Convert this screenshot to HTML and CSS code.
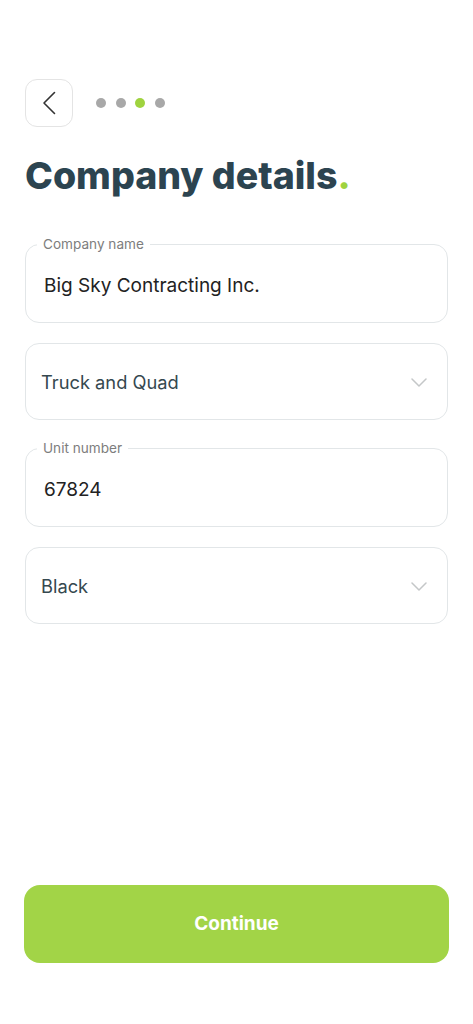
FILE: index.html
```html
<!DOCTYPE html>
<html lang="en">
<head>
  <meta charset="UTF-8">
  <title>Company details</title>
  <link rel="stylesheet" href="styles.css">
</head>
<body>
  <main class="screen">
    <header class="topbar">
      <button class="back-btn" type="button" aria-label="Back">
        <svg width="14" height="24" viewBox="0 0 14 24"><path d="M12.5 1.5 L2 12 L12.5 22.5" fill="none" stroke="#333" stroke-width="1.6" stroke-linecap="round" stroke-linejoin="round"/></svg>
      </button>
      <div class="steps">
        <span class="dot"></span>
        <span class="dot"></span>
        <span class="dot active"></span>
        <span class="dot"></span>
      </div>
    </header>

    <h1 class="title">Company details<span class="accent">.</span></h1>

    <form class="form">
      <fieldset class="field">
        <legend>Company name</legend>
        <input type="text" value="Big Sky Contracting Inc.">
      </fieldset>

      <div class="select">
        <span>Truck and Quad</span>
        <svg width="16" height="9" viewBox="0 0 16 9"><path d="M1 1 L8 8 L15 1" fill="none" stroke="#c4c7c8" stroke-width="1.5" stroke-linecap="round" stroke-linejoin="round"/></svg>
      </div>

      <fieldset class="field">
        <legend>Unit number</legend>
        <input type="text" value="67824">
      </fieldset>

      <div class="select">
        <span>Black</span>
        <svg width="16" height="9" viewBox="0 0 16 9"><path d="M1 1 L8 8 L15 1" fill="none" stroke="#c4c7c8" stroke-width="1.5" stroke-linecap="round" stroke-linejoin="round"/></svg>
      </div>
    </form>

    <button class="continue" type="button">Continue</button>
  </main>
</body>
</html>
```

FILE: styles.css
```css
html, body {
  margin: 0;
  background: #fff;
}
body {
  font-family: Inter, "Noto Sans", sans-serif;
  color: #222;
}
.screen {
  box-sizing: border-box;
  min-height: 100vh;
  display: flex;
  flex-direction: column;
  padding: 79px 25px 61px 25px;
}
.topbar {
  display: flex;
  align-items: center;
  gap: 23px;
}
.back-btn {
  width: 48px;
  height: 48px;
  box-sizing: border-box;
  display: flex;
  align-items: center;
  justify-content: center;
  padding: 0;
  background: #fff;
  border: 1px solid #e4e4e4;
  border-radius: 12px;
}
.steps {
  display: flex;
  gap: 9.5px;
}
.dot {
  width: 10px;
  height: 10px;
  border-radius: 50%;
  background: #a8a8a8;
}
.dot.active {
  background: #9fd33f;
}
.title {
  margin: 27px 0 0 0;
  font-size: 37.5px;
  line-height: 44px;
  font-weight: 800;
  letter-spacing: 0;
  color: #2c4450;
}
.accent {
  color: #9fd33f;
}
.form {
  display: flex;
  flex-direction: column;
  gap: 20px;
  margin-top: 38px;
}
.field {
  margin: 0;
  min-width: 0;
  padding: 22px 18px 24px 18px;
  border: 1px solid #e2e6e8;
  border-radius: 14px;
}
.field legend {
  margin-left: -7px;
  padding: 0 6px;
  font-size: 13.6px;
  line-height: 16px;
  color: #7d7d7d;
}
.field input {
  display: block;
  width: 100%;
  height: 24px;
  padding: 0;
  border: 0;
  outline: none;
  background: transparent;
  font: inherit;
  font-size: 19px;
  line-height: 24px;
  color: #222;
}
.select {
  display: flex;
  align-items: center;
  justify-content: space-between;
  padding: 26px 20px 25px 15px;
  border: 1px solid #e2e6e8;
  border-radius: 14px;
  font-size: 18.3px;
  line-height: 24px;
  color: #35484f;
}
.continue {
  margin: auto -1px 0 -1px;
  height: 78px;
  border: 0;
  border-radius: 16px;
  background: #a2d447;
  color: #fff;
  font-family: inherit;
  font-size: 19px;
  font-weight: 700;
  padding-bottom: 2px;
}
```
